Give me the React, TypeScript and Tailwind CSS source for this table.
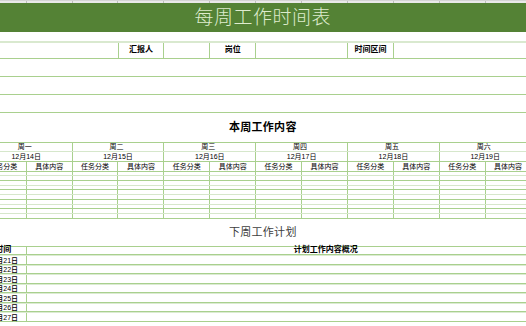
import React from "react";

const days: [string, string][] = [
  ["周一", "12月14日"],
  ["周二", "12月15日"],
  ["周三", "12月16日"],
  ["周四", "12月17日"],
  ["周五", "12月18日"],
  ["周六", "12月19日"],
];

const nextDates = ["12月21日", "12月22日", "12月23日", "12月24日", "12月25日", "12月26日", "12月27日"];

function SubCells() {
  return (
    <>
      {days.map((d, i) => (
        <React.Fragment key={i}>
          <div className="w-[45.9px] shrink-0 border-r border-[#a9d08e]" />
          <div className="w-[45.9px] shrink-0 border-r border-[#a9d08e]" />
        </React.Fragment>
      ))}
    </>
  );
}

export default function App() {
  return (
    <div className="w-[526px] h-[326px] overflow-hidden bg-white text-black font-['Liberation_Sans','Noto_Sans_CJK_SC',sans-serif]">
      <div className="ml-[-19.2px] w-[564px]">
        {/* top strip */}
        <div className="flex h-[2.7px] bg-[#e9e9e9] border-t border-t-[#d4d4d4]">
          {Array.from({ length: 12 }).map((_, i) => (
            <div key={i} className="w-[45.9px] shrink-0 border-r border-[#bdbdbd]" />
          ))}
        </div>
        {/* title band */}
        <div className="h-[29.6px] bg-[#548235] flex items-center justify-center text-[19px] font-light leading-none text-[#dfeccf] tracking-[0.5px]">
          每周工作时间表
        </div>
        <div className="h-[8.7px]" />
        <div className="h-[1.7px] bg-[#d9e9cf]" />
        {/* info row */}
        <div className="flex h-[16.6px] border-b border-[#a9d08e] text-[8px] font-bold leading-none">
          <div className="w-[137.7px] shrink-0 border-r border-[#a9d08e]" />
          <div className="w-[45.9px] shrink-0 border-r border-[#a9d08e] flex items-center justify-center">汇报人</div>
          <div className="w-[45.9px] shrink-0 border-r border-[#a9d08e]" />
          <div className="w-[45.9px] shrink-0 border-r border-[#a9d08e] flex items-center justify-center">岗位</div>
          <div className="w-[91.8px] shrink-0 border-r border-[#a9d08e]" />
          <div className="w-[45.9px] shrink-0 border-r border-[#a9d08e] flex items-center justify-center">时间区间</div>
          <div className="flex-1" />
        </div>
        <div className="h-[18px] border-b border-[#a9d08e]" />
        <div className="h-[17.7px] border-b border-[#a9d08e]" />
        <div className="h-[18px] border-b border-[#a9d08e]" />
        {/* this week title */}
        <div className="h-[29px] flex items-center justify-center text-[11px] font-bold leading-none tracking-[0.3px]">
          本周工作内容
        </div>
        {/* week table */}
        <div className="border-t border-[#a9d08e]">
          <div className="flex h-[8.8px] border-b-[1.5px] border-b-[#d6e7cb] text-[7px] leading-none">
            {days.map((d, i) => (
              <div key={i} className="w-[91.8px] shrink-0 border-r border-[#a9d08e] flex items-center justify-center pr-[3px]">
                {d[0]}
              </div>
            ))}
          </div>
          <div className="flex h-[10px] border-b border-[#a9d08e] text-[7px] leading-none">
            {days.map((d, i) => (
              <div key={i} className="w-[91.8px] shrink-0 border-r border-[#a9d08e] flex items-center justify-center">
                {d[1]}
              </div>
            ))}
          </div>
          <div className="flex h-[10px] border-b border-[#a9d08e] text-[7px] leading-none">
            {days.map((_, i) => (
              <React.Fragment key={i}>
                <div className="w-[45.9px] shrink-0 border-r border-[#a9d08e] flex items-center justify-center">任务分类</div>
                <div className="w-[45.9px] shrink-0 border-r border-[#a9d08e] flex items-center justify-center">具体内容</div>
              </React.Fragment>
            ))}
          </div>
          {Array.from({ length: 5 }).map((_, r) => (
            <React.Fragment key={r}>
              <div className="flex h-[4.7px] border-b border-b-[#d6e7cb]">
                <SubCells />
              </div>
              <div className="flex h-[4.7px] border-b border-[#a9d08e]">
                <SubCells />
              </div>
            </React.Fragment>
          ))}
        </div>
        {/* next week title */}
        <div className="h-[26.9px] flex items-center justify-center text-[11px] leading-none text-[#404040] tracking-[0.3px]">
          下周工作计划
        </div>
        {/* next week table */}
        <div className="border-t border-[#a9d08e]">
          <div className="flex h-[8.8px] border-b border-[#a9d08e] text-[8px] font-bold leading-none">
            <div className="w-[45.9px] shrink-0 border-r border-[#a9d08e] flex items-center justify-center">时间</div>
            <div className="flex-1 flex items-center pl-[267px]">计划工作内容概况</div>
          </div>
          {nextDates.map((d, i) => (
            <div key={i} className="flex h-[9.5px] border-b border-[#a9d08e] border-t-[1.5px] border-t-[#dcebd2] text-[7px] font-medium leading-none">
              <div className="w-[45.9px] shrink-0 border-r border-[#a9d08e] flex items-center justify-center">{d}</div>
              <div className="flex-1" />
            </div>
          ))}
        </div>
      </div>
    </div>
  );
}
